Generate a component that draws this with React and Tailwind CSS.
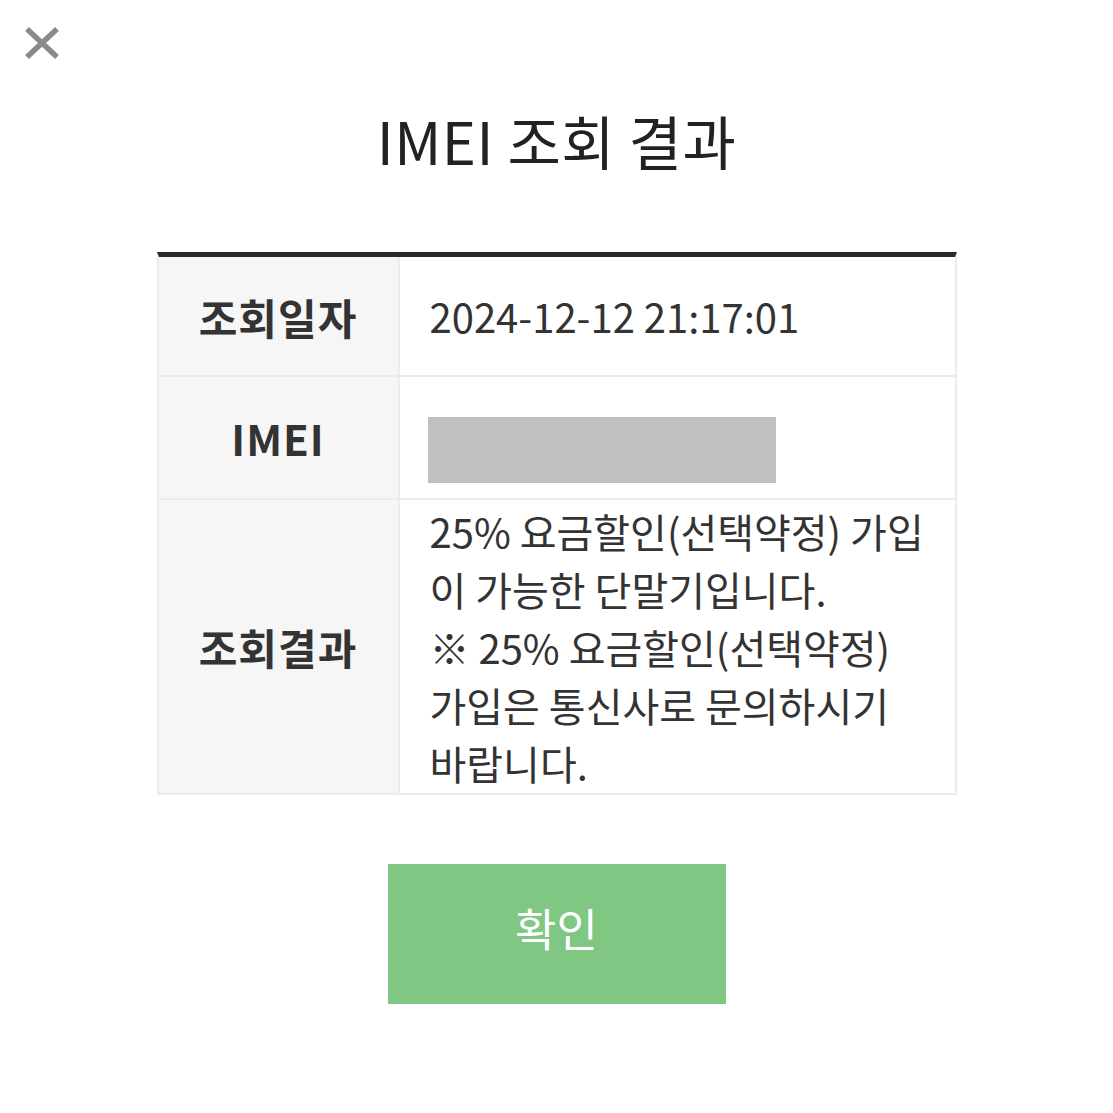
const font = { fontFamily: '"Noto Sans CJK KR", "Noto Sans", sans-serif' };

function Row({ label, children, className = "" }) {
  return (
    <div className={`flex border-b-2 border-[#ececec] ${className}`}>
      <div className="flex w-[241px] shrink-0 items-center justify-center border-r-2 border-[#ececec] bg-[#f6f6f6] text-[42px] font-bold tracking-[1px] text-[#333]">
        {label}
      </div>
      <div className="flex flex-1 items-center bg-white pl-[30px] text-[40px] text-[#333]">
        {children}
      </div>
    </div>
  );
}

export default function App() {
  return (
    <div className="relative h-[1113px] w-[1113px] bg-white" style={font}>
      <button className="absolute left-[24px] top-[26px]">
        <svg width="36" height="34" viewBox="0 0 36 34">
          <path d="M3 3 L33 31 M33 3 L3 31" stroke="#8a8a8a" strokeWidth="5.5" />
        </svg>
      </button>

      <h1 className="pt-[102px] text-center text-[58px] font-normal tracking-[0.5px] leading-[76px] text-[#222]">
        IMEI 조회 결과
      </h1>

      <div className="mx-auto mt-[74px] w-[800px] border-t-[5px] border-[#2b2b2b] border-x-2 border-x-[#ececec]">
        <Row label="조회일자" className="h-[120px]">
          2024-12-12 21:17:01
        </Row>
        <Row label="IMEI" className="h-[123px]">
          <div className="-ml-[2px] mt-[24px] h-[66px] w-[348px] bg-[#c0c0c0]" />
        </Row>
        <Row label="조회결과" className="h-[295px]">
          <div className="whitespace-nowrap leading-[58px]">
            25% 요금할인(선택약정) 가입
            <br />이 가능한 단말기입니다.
            <br />※ 25% 요금할인(선택약정)
            <br />가입은 통신사로 문의하시기
            <br />바랍니다.
          </div>
        </Row>
      </div>

      <div className="mt-[69px] flex justify-center">
        <button className="flex h-[140px] w-[338px] items-center justify-center bg-[#80c784] pb-[12px] text-[45px] text-white">
          확인
        </button>
      </div>
    </div>
  );
}
